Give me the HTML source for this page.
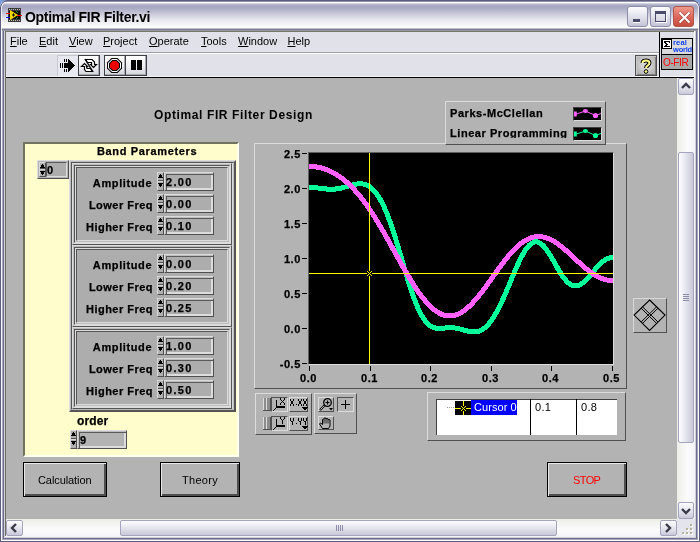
<!DOCTYPE html>
<html><head><meta charset="utf-8"><style>
*{margin:0;padding:0;box-sizing:border-box}
html,body{width:700px;height:542px;overflow:hidden;background:#7b9fdc}
body{will-change:transform;position:relative;font-family:"Liberation Sans",sans-serif;color:#000}
.a{position:absolute}
.t{position:absolute;white-space:nowrap;line-height:13px}
.b11{font-weight:bold;font-size:11px;letter-spacing:0.45px;-webkit-text-stroke:0.25px #000}
.r11{font-size:11px}
.menu span{position:absolute;top:36px;font-size:11px;line-height:11px}
.menu u{text-decoration:underline;text-underline-offset:1px;text-decoration-thickness:1px}
</style></head><body>
<!-- window -->
<div class="a" style="left:0;top:0;width:700px;height:542px;border-radius:8px 8px 0 0;overflow:hidden;background:#e1e1ea">
  <!-- title bar -->
  <div class="a" style="left:0;top:0;width:700px;height:32px;background:linear-gradient(#5c5c80 0 1px,#9090aa 1px 2px,#fff 2px 3px,#d4d4e0 3px 4px,#b8b8cc 4px 5px,#a9a9c3 5px 8px,#e4e4ec 19px,#f6f6f9 25px,#fcfcfd 27px 28px,#c0c0c8 28px 29px,#7c7c98 29px 30px,#9898a4 30px 31px,#787868 31px 32px)"></div>
  <div class="a" style="left:0;top:0;width:700px;height:40px;border-radius:8px 8px 0 0;border:1px solid #5c5c80;border-bottom:none"></div>
  <div class="a" style="left:1px;top:1px;width:698px;height:39px;border-radius:7px 7px 0 0;border:1px solid rgba(255,255,255,0.8);border-top-color:transparent;border-bottom:none"></div>
  <!-- frame rings -->
  <div class="a" style="left:0px;top:31px;width:700px;height:511px;border:1px solid #5c5c7e;border-top:none"></div>
  <div class="a" style="left:1px;top:31px;width:698px;height:510px;border:1px solid #fcfcfe;border-top:none"></div>
  <div class="a" style="left:2px;top:31px;width:696px;height:509px;border:1px solid #a6a6c0;border-top:none"></div>
  <div class="a" style="left:3px;top:31px;width:694px;height:508px;border:1px solid #6e6e8c;border-top:none"></div>
  <div class="a" style="left:4px;top:31px;width:692px;height:507px;border:1px solid #d0d0d8;border-top:none"></div>
  <div class="a" style="left:5px;top:31px;width:1px;height:505px;background:#716f64"></div>
  <div class="a" style="left:694px;top:31px;width:1px;height:506px;background:#fbfbf6"></div>
  <div class="a" style="left:5px;top:536px;width:690px;height:1px;background:#fbfbf0"></div>
  <!-- title icon -->
  <svg class="a" style="left:5px;top:7px" width="18" height="16" viewBox="0 0 18 16">
    <rect x="3" y="1" width="13" height="14" fill="#3a3a3a"/>
    <rect x="4" y="4" width="11" height="8" fill="#0a0a0a"/>
    <g fill="#bbb"><rect x="4" y="2" width="1" height="1"/><rect x="6" y="2" width="1" height="1"/><rect x="8" y="2" width="1" height="1"/><rect x="10" y="2" width="1" height="1"/><rect x="12" y="2" width="1" height="1"/><rect x="14" y="2" width="1" height="1"/>
    <rect x="4" y="13" width="1" height="1"/><rect x="6" y="13" width="1" height="1"/><rect x="8" y="13" width="1" height="1"/><rect x="10" y="13" width="1" height="1"/><rect x="12" y="13" width="1" height="1"/><rect x="14" y="13" width="1" height="1"/></g>
    <rect x="1" y="6" width="4" height="1" fill="#f00"/><rect x="1" y="10" width="4" height="1" fill="#00f"/><rect x="12" y="8" width="5" height="1" fill="#f00"/>
    <path d="M5 3 L13 8 L5 13 Z" fill="#f5d800"/><path d="M7 8h3M8.5 6.5v3" stroke="#000" stroke-width="1"/>
    <path d="M11 4 l2 2 M11 12 l2 -2" stroke="#1a8a1a"/>
  </svg>
  <div class="t" style="left:25px;top:10px;font-size:14px;line-height:14px;font-weight:bold;letter-spacing:-0.3px;color:#000">Optimal FIR Filter.vi</div>
  <!-- title buttons -->
  <div class="a" style="left:627px;top:6px;width:21px;height:21px;border:1px solid #8d8dab;border-radius:3px;background:linear-gradient(#fdfdff,#dcdce8 60%,#c4c4d6)"><div class="a" style="left:5px;top:12px;width:7px;height:3px;background:#4a4a6a;box-shadow:0 1px 0 #fff"></div></div>
  <div class="a" style="left:650px;top:6px;width:21px;height:21px;border:1px solid #8d8dab;border-radius:3px;background:linear-gradient(#fdfdff,#dcdce8 60%,#c4c4d6)"><div class="a" style="left:4px;top:4px;width:11px;height:11px;border:1px solid #4a4a6a;border-top-width:3px;box-shadow:1px 1px 0 #fff"></div></div>
  <div class="a" style="left:673px;top:6px;width:21px;height:21px;border:1px solid #b0584c;border-radius:3px;background:linear-gradient(#ee9a8e,#dc6a5c 50%,#c84c40)"><svg class="a" style="left:2px;top:2px" width="17" height="17"><path d="M3.5 3.5L13.5 13.5M13.5 3.5L3.5 13.5" stroke="#7a2a20" stroke-width="3.2" stroke-opacity="0.5"/><path d="M3.5 3.5L13.5 13.5M13.5 3.5L3.5 13.5" stroke="#fff" stroke-width="2"/></svg></div>
  <!-- menu -->
  <div class="menu">
    <span style="left:10px"><u>F</u>ile</span>
    <span style="left:39px"><u>E</u>dit</span>
    <span style="left:69px"><u>V</u>iew</span>
    <span style="left:103px"><u>P</u>roject</span>
    <span style="left:149px"><u>O</u>perate</span>
    <span style="left:201px"><u>T</u>ools</span>
    <span style="left:238px"><u>W</u>indow</span>
    <span style="left:287.5px"><u>H</u>elp</span>
  </div>
  <div class="a" style="left:6px;top:52px;width:653px;height:1px;background:#a0a0a8"></div>
  <div class="a" style="left:6px;top:53px;width:653px;height:1px;background:#fff"></div>
  <div class="a" style="left:6px;top:76px;width:688px;height:1px;background:#f4f4f8"></div>
  <div class="a" style="left:6px;top:77px;width:688px;height:1px;background:#000"></div>
  <div class="a" style="left:659px;top:32px;width:1px;height:45px;background:#000"></div>
  <!-- toolbar buttons -->
  <div class="a" style="left:57px;top:55px;width:21px;height:21px;background:#e8e8f0;border-left:1px solid #c8c8d0;border-top:1px solid #c8c8d0"></div>
  <svg class="a" style="left:56px;top:54px" width="22" height="22" shape-rendering="crispEdges" fill="#000">
    <polygon points="12,5 19,11.5 12,18"/>
    <rect x="8" y="9" width="4" height="5"/>
    <rect x="8" y="5" width="1" height="3"/><rect x="10" y="5" width="1" height="3"/>
    <rect x="8" y="15" width="1" height="3"/><rect x="10" y="15" width="1" height="3"/>
    <rect x="4" y="9" width="1" height="5"/><rect x="6" y="9" width="1" height="5"/>
  </svg>
  <div class="a" style="left:78px;top:55px;width:22px;height:21px;border:1px solid #404048;background:linear-gradient(#fff,#f0f0f4 50%,#d4d4dc);box-shadow:inset -1px -1px 0 #a8a8b0"></div>
  <svg class="a" style="left:77px;top:54px" width="24" height="23">
    <polygon points="8.5,5.5 15,5.5 17.5,8 17.5,10.5 19.5,10.5 16.5,13.5 13.5,10.5 14.5,10.5 14.5,8.5 10.5,8.5" fill="#fff" stroke="#000" stroke-width="1.2"/>
    <polygon points="15.5,17.5 9,17.5 7.5,15.5 7.5,12.5 4.5,12.5 7.5,9.5 10.5,12.5 9.5,12.5 10,14.5 13.5,14.5" fill="#fff" stroke="#000" stroke-width="1.2"/>
    <path d="M8 5 L16 18" stroke="#000" stroke-width="1.3"/>
  </svg>
  <div class="a" style="left:104px;top:55px;width:22px;height:21px;border:1px solid #404048;background:linear-gradient(#fff,#f0f0f4 50%,#d4d4dc);box-shadow:inset -1px -1px 0 #a8a8b0"></div>
  <svg class="a" style="left:104px;top:55px" width="22" height="21">
    <polygon points="7.5,3 13.5,3 18,7.5 18,13.5 13.5,18 7.5,18 3,13.5 3,7.5" fill="#000"/>
    <polygon points="8,4 13,4 17,8 17,13 13,17 8,17 4,13 4,8" fill="#fff"/>
    <polygon points="8.3,5 12.7,5 16,8.3 16,12.7 12.7,16 8.3,16 5,12.7 5,8.3" fill="#000"/>
    <polygon points="8.7,6 12.3,6 15,8.7 15,12.3 12.3,15 8.7,15 6,12.3 6,8.7" fill="#e00"/>
  </svg>
  <div class="a" style="left:125px;top:55px;width:22px;height:21px;border:1px solid #404048;background:linear-gradient(#fff,#f0f0f4 50%,#d4d4dc);box-shadow:inset -1px -1px 0 #a8a8b0"></div>
  <div class="a" style="left:131px;top:60px;width:5px;height:10px;background:#000"></div>
  <div class="a" style="left:137px;top:60px;width:5px;height:10px;background:#000"></div>
  <!-- help button -->
  <div class="a" style="left:635px;top:55px;width:22px;height:21px;border:1px solid #505050;background:radial-gradient(ellipse at 50% 45%,#d4d4d4 30%,#a4a4a4 100%);box-shadow:inset 1px 1px 0 #c8c8c8,inset -1px -1px 0 #808080"></div>
  <svg class="a" style="left:635px;top:55px" width="22" height="21">
    <path d="M7.5 8 C7.5 4.5 14.5 4.5 14.5 8 C14.5 10.5 11 10.5 11 13" fill="none" stroke="#000" stroke-width="4"/>
    <path d="M7.5 8 C7.5 4.5 14.5 4.5 14.5 8 C14.5 10.5 11 10.5 11 13" fill="none" stroke="#ffff88" stroke-width="2"/>
    <circle cx="11" cy="16.5" r="1.8" fill="#ffff88" stroke="#000"/>
  </svg>
  <!-- connector icon -->
  <div class="a" style="left:661px;top:38px;width:32px;height:32px;background:#000"></div>
  <div class="a" style="left:662px;top:39px;width:30px;height:15px;background:#dadada"></div>
  <div class="a" style="left:662px;top:55px;width:30px;height:14px;background:#a9a9a9"></div>
  <div class="a" style="left:662px;top:39px;width:10px;height:10px;border:1px solid #000;background:#fff"></div>
  <svg class="a" style="left:662px;top:39px" width="10" height="10" shape-rendering="crispEdges" fill="#000"><rect x="2" y="2" width="6" height="1"/><rect x="2" y="3" width="2" height="1"/><rect x="3" y="4" width="2" height="1"/><rect x="4" y="5" width="2" height="1"/><rect x="3" y="6" width="2" height="1"/><rect x="2" y="7" width="6" height="1"/><rect x="7" y="3" width="1" height="1"/></svg>
  <div class="t" style="left:673px;top:39px;font-size:7.5px;line-height:8px;color:#1040f0;font-weight:bold;letter-spacing:0.2px">real</div>
  <div class="t" style="left:673px;top:46px;font-size:7.5px;line-height:8px;color:#1040f0;font-weight:bold;letter-spacing:-0.2px">world</div>
  <div class="t" style="left:663px;top:58px;font-size:10px;line-height:10px;color:#f00;letter-spacing:-0.4px">O-FIR</div>

  <!-- panel -->
  <div class="a" style="left:6px;top:78px;width:671px;height:441px;background:#b3b3b3"></div>

  <!-- vertical scrollbar -->
  <div class="a" style="left:677px;top:78px;width:18px;height:441px;background:linear-gradient(90deg,#eeeee8,#fbfbfd 60%,#f4f4f8)"></div>
  <div class="a" style="left:678px;top:78px;width:16px;height:17px;border:1px solid #a4a4be;border-radius:2px;background:linear-gradient(#fdfdff,#dcdce8 70%,#c8c8d8)"></div>
  <svg class="a" style="left:678px;top:78px" width="16" height="17"><path d="M4 10 L8 6 L12 10" fill="none" stroke="#3a3a48" stroke-width="2.4"/></svg>
  <div class="a" style="left:678px;top:152px;width:16px;height:291px;border:1px solid #a4a4be;border-radius:2px;background:linear-gradient(90deg,#fdfdff,#e4e4ee 50%,#c8c8d8)"></div>
  <div class="a" style="left:683px;top:294px;width:6px;height:7px;background:linear-gradient(#8c8ca8 0 1px,transparent 1px 2px,#8c8ca8 2px 3px,transparent 3px 4px,#8c8ca8 4px 5px,transparent 5px 6px,#8c8ca8 6px 7px)"></div>
  <div class="a" style="left:678px;top:502px;width:16px;height:17px;border:1px solid #a4a4be;border-radius:2px;background:linear-gradient(#fdfdff,#dcdce8 70%,#c8c8d8)"></div>
  <svg class="a" style="left:678px;top:502px" width="16" height="17"><path d="M4 7 L8 11 L12 7" fill="none" stroke="#3a3a48" stroke-width="2.4"/></svg>
  <!-- horizontal scrollbar -->
  <div class="a" style="left:6px;top:519px;width:671px;height:18px;background:linear-gradient(#eeeee8,#fbfbfd 60%,#f4f4f8)"></div>
  <div class="a" style="left:6px;top:520px;width:17px;height:16px;border:1px solid #a4a4be;border-radius:2px;background:linear-gradient(#fdfdff,#dcdce8 70%,#c8c8d8)"></div>
  <svg class="a" style="left:6px;top:520px" width="17" height="16"><path d="M10 4 L6 8 L10 12" fill="none" stroke="#3a3a48" stroke-width="2.4"/></svg>
  <div class="a" style="left:120px;top:520px;width:437px;height:16px;border:1px solid #a4a4be;border-radius:2px;background:linear-gradient(#fdfdff,#e4e4ee 50%,#c8c8d8)"></div>
  <div class="a" style="left:336px;top:525px;width:7px;height:6px;background:linear-gradient(90deg,#8c8ca8 0 1px,transparent 1px 2px,#8c8ca8 2px 3px,transparent 3px 4px,#8c8ca8 4px 5px,transparent 5px 6px,#8c8ca8 6px 7px)"></div>
  <div class="a" style="left:660px;top:520px;width:17px;height:16px;border:1px solid #a4a4be;border-radius:2px;background:linear-gradient(#fdfdff,#dcdce8 70%,#c8c8d8)"></div>
  <svg class="a" style="left:660px;top:520px" width="17" height="16"><path d="M6 4 L10 8 L6 12" fill="none" stroke="#3a3a48" stroke-width="2.4"/></svg>
  <!-- size grip -->
  <div class="a" style="left:677px;top:519px;width:18px;height:18px;background:#e4e4ec"></div>
  <svg class="a" style="left:677px;top:519px" width="18" height="18" shape-rendering="crispEdges"><rect x="14" y="6" width="2" height="2" fill="#fff"/><rect x="10" y="10" width="2" height="2" fill="#fff"/><rect x="14" y="10" width="2" height="2" fill="#fff"/><rect x="6" y="14" width="2" height="2" fill="#fff"/><rect x="10" y="14" width="2" height="2" fill="#fff"/><rect x="14" y="14" width="2" height="2" fill="#fff"/><rect x="13" y="5" width="2" height="2" fill="#b8b49c"/><rect x="9" y="9" width="2" height="2" fill="#b8b49c"/><rect x="13" y="9" width="2" height="2" fill="#b8b49c"/><rect x="5" y="13" width="2" height="2" fill="#b8b49c"/><rect x="9" y="13" width="2" height="2" fill="#b8b49c"/><rect x="13" y="13" width="2" height="2" fill="#b8b49c"/></svg>

  <!-- PANEL CONTENT -->
  <div class="t b11" style="left:154px;top:109px;font-size:12px;letter-spacing:0.62px;-webkit-text-stroke:0">Optimal FIR Filter Design</div>
  <div class="a" style="left:23px;top:142px;width:216px;height:315px;border-style:solid;border-width:2px;border-color:#717360 #fffff0 #fffff0 #717360;background:#fffdcc"></div><div class="t b11" style="left:97px;top:145px;letter-spacing:0.65px">Band Parameters</div><div class="a" style="left:37px;top:160px;width:32px;height:19px;border-style:solid;border-width:1px;border-color:#dcdcdc #505050 #505050 #dcdcdc;background:#b3b3b3"></div><div class="a" style="left:46px;top:162px;width:21px;height:15px;border-style:solid;border-width:1px;border-color:#5a5a5a #dcdcdc #dcdcdc #5a5a5a;background:#adadad"></div><div class="a" style="left:39px;top:162px;width:7px;height:15px;border-style:solid;border-width:1px;border-color:#d8d8d8 #505050 #505050 #d8d8d8;background:#b0b0b0"></div><div class="a" style="left:40px;top:168px;width:5px;height:1px;background:#505050"></div><div class="a" style="left:40px;top:169px;width:5px;height:1px;background:#d8d8d8"></div><svg class="a" style="left:39px;top:162px" width="7" height="15" shape-rendering="crispEdges"><path d="M3 2h1v1h-1zM2 3h3v1h-3zM1 5h5v1h-5zM2 4h3v1h-3z" fill="#000"/><path d="M1 9h5v1h-5zM2 10h3v1h-3zM2 11h3v1h-3zM3 12h1v1h-1z" fill="#000"/></svg><div class="t b11" style="left:47px;top:164px;letter-spacing:1.3px">0</div><div class="a" style="left:69px;top:160px;width:167px;height:252px;border-style:solid;border-width:1px;border-color:#dcdcdc #555555 #555555 #dcdcdc"></div><div class="a" style="left:70px;top:161px;width:165px;height:250px;border-style:solid;border-width:1px;border-color:#bcbcbc #555555 #555555 #bcbcbc"></div><div class="a" style="left:71px;top:162px;width:163px;height:248px;border-style:solid;border-width:1px;border-color:#555555 #bcbcbc #bcbcbc #555555"></div><div class="a" style="left:72px;top:163px;width:161px;height:246px;border-style:solid;border-width:1px;border-color:#dcdcdc #dcdcdc #dcdcdc #dcdcdc"></div><div class="a" style="left:73px;top:164px;width:159px;height:244px;background:#b3b3b3"></div><div class="a" style="left:72px;top:163px;width:160px;height:82px;border-style:solid;border-width:1px;border-color:#dcdcdc #555555 #555555 #dcdcdc"></div><div class="a" style="left:73px;top:164px;width:158px;height:80px;border-style:solid;border-width:1px;border-color:#bcbcbc #dcdcdc #dcdcdc #bcbcbc"></div><div class="a" style="left:74px;top:165px;width:156px;height:78px;border-style:solid;border-width:1px;border-color:#555555 #dcdcdc #dcdcdc #555555"></div><div class="a" style="left:75px;top:166px;width:154px;height:76px;border-style:solid;border-width:1px;border-color:#dcdcdc #bcbcbc #bcbcbc #dcdcdc"></div><div class="a" style="left:76px;top:167px;width:152px;height:74px;border-style:solid;border-width:1px;border-color:#555555 #dcdcdc #dcdcdc #555555"></div><div class="a" style="left:77px;top:168px;width:150px;height:72px;background:#adadad"></div><div class="t b11" style="left:2.1999999999999886px;width:150px;text-align:right;top:177px;letter-spacing:0.62px">Amplitude</div><div class="a" style="left:157px;top:172px;width:7px;height:19px;border-style:solid;border-width:1px;border-color:#d8d8d8 #505050 #505050 #d8d8d8;background:#b0b0b0"></div><div class="a" style="left:158px;top:180px;width:5px;height:1px;background:#505050"></div><div class="a" style="left:158px;top:181px;width:5px;height:1px;background:#d8d8d8"></div><svg class="a" style="left:157px;top:172px" width="7" height="19" shape-rendering="crispEdges"><path d="M3 2h1v1h-1zM2 3h3v1h-3zM1 5h5v1h-5zM2 4h3v1h-3z" fill="#000"/><path d="M1 11h5v1h-5zM2 12h3v1h-3zM2 13h3v1h-3zM3 14h1v1h-1z" fill="#000"/></svg><div class="t b11" style="left:3.0px;width:150px;text-align:right;top:199px;letter-spacing:0.48px">Lower Freq</div><div class="a" style="left:157px;top:194px;width:7px;height:19px;border-style:solid;border-width:1px;border-color:#d8d8d8 #505050 #505050 #d8d8d8;background:#b0b0b0"></div><div class="a" style="left:158px;top:202px;width:5px;height:1px;background:#505050"></div><div class="a" style="left:158px;top:203px;width:5px;height:1px;background:#d8d8d8"></div><svg class="a" style="left:157px;top:194px" width="7" height="19" shape-rendering="crispEdges"><path d="M3 2h1v1h-1zM2 3h3v1h-3zM1 5h5v1h-5zM2 4h3v1h-3z" fill="#000"/><path d="M1 11h5v1h-5zM2 12h3v1h-3zM2 13h3v1h-3zM3 14h1v1h-1z" fill="#000"/></svg><div class="t b11" style="left:3.0px;width:150px;text-align:right;top:221px;letter-spacing:0.48px">Higher Freq</div><div class="a" style="left:157px;top:216px;width:7px;height:19px;border-style:solid;border-width:1px;border-color:#d8d8d8 #505050 #505050 #d8d8d8;background:#b0b0b0"></div><div class="a" style="left:158px;top:224px;width:5px;height:1px;background:#505050"></div><div class="a" style="left:158px;top:225px;width:5px;height:1px;background:#d8d8d8"></div><svg class="a" style="left:157px;top:216px" width="7" height="19" shape-rendering="crispEdges"><path d="M3 2h1v1h-1zM2 3h3v1h-3zM1 5h5v1h-5zM2 4h3v1h-3z" fill="#000"/><path d="M1 11h5v1h-5zM2 12h3v1h-3zM2 13h3v1h-3zM3 14h1v1h-1z" fill="#000"/></svg><div class="a" style="left:72px;top:245px;width:160px;height:82px;border-style:solid;border-width:1px;border-color:#dcdcdc #555555 #555555 #dcdcdc"></div><div class="a" style="left:73px;top:246px;width:158px;height:80px;border-style:solid;border-width:1px;border-color:#bcbcbc #dcdcdc #dcdcdc #bcbcbc"></div><div class="a" style="left:74px;top:247px;width:156px;height:78px;border-style:solid;border-width:1px;border-color:#555555 #dcdcdc #dcdcdc #555555"></div><div class="a" style="left:75px;top:248px;width:154px;height:76px;border-style:solid;border-width:1px;border-color:#dcdcdc #bcbcbc #bcbcbc #dcdcdc"></div><div class="a" style="left:76px;top:249px;width:152px;height:74px;border-style:solid;border-width:1px;border-color:#555555 #dcdcdc #dcdcdc #555555"></div><div class="a" style="left:77px;top:250px;width:150px;height:72px;background:#adadad"></div><div class="t b11" style="left:2.1999999999999886px;width:150px;text-align:right;top:259px;letter-spacing:0.62px">Amplitude</div><div class="a" style="left:157px;top:254px;width:7px;height:19px;border-style:solid;border-width:1px;border-color:#d8d8d8 #505050 #505050 #d8d8d8;background:#b0b0b0"></div><div class="a" style="left:158px;top:262px;width:5px;height:1px;background:#505050"></div><div class="a" style="left:158px;top:263px;width:5px;height:1px;background:#d8d8d8"></div><svg class="a" style="left:157px;top:254px" width="7" height="19" shape-rendering="crispEdges"><path d="M3 2h1v1h-1zM2 3h3v1h-3zM1 5h5v1h-5zM2 4h3v1h-3z" fill="#000"/><path d="M1 11h5v1h-5zM2 12h3v1h-3zM2 13h3v1h-3zM3 14h1v1h-1z" fill="#000"/></svg><div class="t b11" style="left:3.0px;width:150px;text-align:right;top:281px;letter-spacing:0.48px">Lower Freq</div><div class="a" style="left:157px;top:276px;width:7px;height:19px;border-style:solid;border-width:1px;border-color:#d8d8d8 #505050 #505050 #d8d8d8;background:#b0b0b0"></div><div class="a" style="left:158px;top:284px;width:5px;height:1px;background:#505050"></div><div class="a" style="left:158px;top:285px;width:5px;height:1px;background:#d8d8d8"></div><svg class="a" style="left:157px;top:276px" width="7" height="19" shape-rendering="crispEdges"><path d="M3 2h1v1h-1zM2 3h3v1h-3zM1 5h5v1h-5zM2 4h3v1h-3z" fill="#000"/><path d="M1 11h5v1h-5zM2 12h3v1h-3zM2 13h3v1h-3zM3 14h1v1h-1z" fill="#000"/></svg><div class="t b11" style="left:3.0px;width:150px;text-align:right;top:303px;letter-spacing:0.48px">Higher Freq</div><div class="a" style="left:157px;top:298px;width:7px;height:19px;border-style:solid;border-width:1px;border-color:#d8d8d8 #505050 #505050 #d8d8d8;background:#b0b0b0"></div><div class="a" style="left:158px;top:306px;width:5px;height:1px;background:#505050"></div><div class="a" style="left:158px;top:307px;width:5px;height:1px;background:#d8d8d8"></div><svg class="a" style="left:157px;top:298px" width="7" height="19" shape-rendering="crispEdges"><path d="M3 2h1v1h-1zM2 3h3v1h-3zM1 5h5v1h-5zM2 4h3v1h-3z" fill="#000"/><path d="M1 11h5v1h-5zM2 12h3v1h-3zM2 13h3v1h-3zM3 14h1v1h-1z" fill="#000"/></svg><div class="a" style="left:72px;top:327px;width:160px;height:82px;border-style:solid;border-width:1px;border-color:#dcdcdc #555555 #555555 #dcdcdc"></div><div class="a" style="left:73px;top:328px;width:158px;height:80px;border-style:solid;border-width:1px;border-color:#bcbcbc #dcdcdc #dcdcdc #bcbcbc"></div><div class="a" style="left:74px;top:329px;width:156px;height:78px;border-style:solid;border-width:1px;border-color:#555555 #dcdcdc #dcdcdc #555555"></div><div class="a" style="left:75px;top:330px;width:154px;height:76px;border-style:solid;border-width:1px;border-color:#dcdcdc #bcbcbc #bcbcbc #dcdcdc"></div><div class="a" style="left:76px;top:331px;width:152px;height:74px;border-style:solid;border-width:1px;border-color:#555555 #dcdcdc #dcdcdc #555555"></div><div class="a" style="left:77px;top:332px;width:150px;height:72px;background:#adadad"></div><div class="t b11" style="left:2.1999999999999886px;width:150px;text-align:right;top:341px;letter-spacing:0.62px">Amplitude</div><div class="a" style="left:157px;top:336px;width:7px;height:19px;border-style:solid;border-width:1px;border-color:#d8d8d8 #505050 #505050 #d8d8d8;background:#b0b0b0"></div><div class="a" style="left:158px;top:344px;width:5px;height:1px;background:#505050"></div><div class="a" style="left:158px;top:345px;width:5px;height:1px;background:#d8d8d8"></div><svg class="a" style="left:157px;top:336px" width="7" height="19" shape-rendering="crispEdges"><path d="M3 2h1v1h-1zM2 3h3v1h-3zM1 5h5v1h-5zM2 4h3v1h-3z" fill="#000"/><path d="M1 11h5v1h-5zM2 12h3v1h-3zM2 13h3v1h-3zM3 14h1v1h-1z" fill="#000"/></svg><div class="t b11" style="left:3.0px;width:150px;text-align:right;top:363px;letter-spacing:0.48px">Lower Freq</div><div class="a" style="left:157px;top:358px;width:7px;height:19px;border-style:solid;border-width:1px;border-color:#d8d8d8 #505050 #505050 #d8d8d8;background:#b0b0b0"></div><div class="a" style="left:158px;top:366px;width:5px;height:1px;background:#505050"></div><div class="a" style="left:158px;top:367px;width:5px;height:1px;background:#d8d8d8"></div><svg class="a" style="left:157px;top:358px" width="7" height="19" shape-rendering="crispEdges"><path d="M3 2h1v1h-1zM2 3h3v1h-3zM1 5h5v1h-5zM2 4h3v1h-3z" fill="#000"/><path d="M1 11h5v1h-5zM2 12h3v1h-3zM2 13h3v1h-3zM3 14h1v1h-1z" fill="#000"/></svg><div class="t b11" style="left:3.0px;width:150px;text-align:right;top:385px;letter-spacing:0.48px">Higher Freq</div><div class="a" style="left:157px;top:380px;width:7px;height:19px;border-style:solid;border-width:1px;border-color:#d8d8d8 #505050 #505050 #d8d8d8;background:#b0b0b0"></div><div class="a" style="left:158px;top:388px;width:5px;height:1px;background:#505050"></div><div class="a" style="left:158px;top:389px;width:5px;height:1px;background:#d8d8d8"></div><svg class="a" style="left:157px;top:380px" width="7" height="19" shape-rendering="crispEdges"><path d="M3 2h1v1h-1zM2 3h3v1h-3zM1 5h5v1h-5zM2 4h3v1h-3z" fill="#000"/><path d="M1 11h5v1h-5zM2 12h3v1h-3zM2 13h3v1h-3zM3 14h1v1h-1z" fill="#000"/></svg><div class="a" style="left:164px;top:172px;width:50px;height:19px;border-style:solid;border-width:1px;border-color:#dcdcdc #505050 #505050 #dcdcdc;background:#adadad;box-shadow:inset 1px 1px 0 #bcbcbc,inset 2px 2px 0 #5a5a5a,inset -2px -2px 0 #dcdcdc"></div><div class="t b11" style="left:166px;top:176px;letter-spacing:1.3px">2.00</div><div class="a" style="left:164px;top:194px;width:50px;height:19px;border-style:solid;border-width:1px;border-color:#dcdcdc #505050 #505050 #dcdcdc;background:#adadad;box-shadow:inset 1px 1px 0 #bcbcbc,inset 2px 2px 0 #5a5a5a,inset -2px -2px 0 #dcdcdc"></div><div class="t b11" style="left:166px;top:198px;letter-spacing:1.3px">0.00</div><div class="a" style="left:164px;top:216px;width:50px;height:19px;border-style:solid;border-width:1px;border-color:#dcdcdc #505050 #505050 #dcdcdc;background:#adadad;box-shadow:inset 1px 1px 0 #bcbcbc,inset 2px 2px 0 #5a5a5a,inset -2px -2px 0 #dcdcdc"></div><div class="t b11" style="left:166px;top:220px;letter-spacing:1.3px">0.10</div><div class="a" style="left:164px;top:254px;width:50px;height:19px;border-style:solid;border-width:1px;border-color:#dcdcdc #505050 #505050 #dcdcdc;background:#adadad;box-shadow:inset 1px 1px 0 #bcbcbc,inset 2px 2px 0 #5a5a5a,inset -2px -2px 0 #dcdcdc"></div><div class="t b11" style="left:166px;top:258px;letter-spacing:1.3px">0.00</div><div class="a" style="left:164px;top:276px;width:50px;height:19px;border-style:solid;border-width:1px;border-color:#dcdcdc #505050 #505050 #dcdcdc;background:#adadad;box-shadow:inset 1px 1px 0 #bcbcbc,inset 2px 2px 0 #5a5a5a,inset -2px -2px 0 #dcdcdc"></div><div class="t b11" style="left:166px;top:280px;letter-spacing:1.3px">0.20</div><div class="a" style="left:164px;top:298px;width:50px;height:19px;border-style:solid;border-width:1px;border-color:#dcdcdc #505050 #505050 #dcdcdc;background:#adadad;box-shadow:inset 1px 1px 0 #bcbcbc,inset 2px 2px 0 #5a5a5a,inset -2px -2px 0 #dcdcdc"></div><div class="t b11" style="left:166px;top:302px;letter-spacing:1.3px">0.25</div><div class="a" style="left:164px;top:336px;width:50px;height:19px;border-style:solid;border-width:1px;border-color:#dcdcdc #505050 #505050 #dcdcdc;background:#adadad;box-shadow:inset 1px 1px 0 #bcbcbc,inset 2px 2px 0 #5a5a5a,inset -2px -2px 0 #dcdcdc"></div><div class="t b11" style="left:166px;top:340px;letter-spacing:1.3px">1.00</div><div class="a" style="left:164px;top:358px;width:50px;height:19px;border-style:solid;border-width:1px;border-color:#dcdcdc #505050 #505050 #dcdcdc;background:#adadad;box-shadow:inset 1px 1px 0 #bcbcbc,inset 2px 2px 0 #5a5a5a,inset -2px -2px 0 #dcdcdc"></div><div class="t b11" style="left:166px;top:362px;letter-spacing:1.3px">0.30</div><div class="a" style="left:164px;top:380px;width:50px;height:19px;border-style:solid;border-width:1px;border-color:#dcdcdc #505050 #505050 #dcdcdc;background:#adadad;box-shadow:inset 1px 1px 0 #bcbcbc,inset 2px 2px 0 #5a5a5a,inset -2px -2px 0 #dcdcdc"></div><div class="t b11" style="left:166px;top:384px;letter-spacing:1.3px">0.50</div><div class="t b11" style="left:77px;top:415px;font-size:12px;letter-spacing:0.15px">order</div><div class="a" style="left:70px;top:430px;width:7px;height:19px;border-style:solid;border-width:1px;border-color:#d8d8d8 #505050 #505050 #d8d8d8;background:#b0b0b0"></div><div class="a" style="left:71px;top:438px;width:5px;height:1px;background:#505050"></div><div class="a" style="left:71px;top:439px;width:5px;height:1px;background:#d8d8d8"></div><svg class="a" style="left:70px;top:430px" width="7" height="19" shape-rendering="crispEdges"><path d="M3 2h1v1h-1zM2 3h3v1h-3zM1 5h5v1h-5zM2 4h3v1h-3z" fill="#000"/><path d="M1 11h5v1h-5zM2 12h3v1h-3zM2 13h3v1h-3zM3 14h1v1h-1z" fill="#000"/></svg><div class="a" style="left:77px;top:430px;width:50px;height:19px;border-style:solid;border-width:1px;border-color:#dcdcdc #505050 #505050 #dcdcdc;background:#b3b3b3;box-shadow:inset 1px 1px 0 #bcbcbc,inset 2px 2px 0 #5a5a5a,inset -2px -2px 0 #dcdcdc"></div><div class="t b11" style="left:80px;top:434px;letter-spacing:1.3px">9</div>
  <div class="a" style="left:254px;top:143px;width:373px;height:246px;border-style:solid;border-width:1px;border-color:#dcdcdc #505050 #505050 #dcdcdc"></div><div class="a" style="left:308px;top:152px;width:306px;height:213px;border-style:solid;border-width:1px;border-color:#606060 #dcdcdc #dcdcdc #606060;background:#000"></div><svg class="a" style="left:0;top:0" width="700" height="542">
<defs><clipPath id="pc"><rect x="309" y="153" width="304" height="211"/></clipPath></defs>
<g clip-path="url(#pc)">
<path d="M309 187.33 L310 187.34 L311 187.37 L312 187.41 L313 187.47 L314 187.55 L315 187.64 L316 187.74 L317 187.85 L318 187.97 L319 188.10 L320 188.23 L321 188.36 L322 188.49 L323 188.62 L324 188.75 L325 188.86 L326 188.96 L327 189.05 L328 189.12 L329 189.18 L330 189.21 L331 189.23 L332 189.22 L333 189.19 L334 189.13 L335 189.05 L336 188.94 L337 188.81 L338 188.66 L339 188.48 L340 188.28 L341 188.06 L342 187.82 L343 187.56 L344 187.29 L345 187.01 L346 186.72 L347 186.42 L348 186.12 L349 185.83 L350 185.54 L351 185.25 L352 184.98 L353 184.73 L354 184.50 L355 184.29 L356 184.11 L357 183.97 L358 183.86 L359 183.80 L360 183.78 L361 183.82 L362 183.90 L363 184.05 L364 184.26 L365 184.54 L366 184.89 L367 185.31 L368 185.81 L369 186.40 L370 187.07 L371 187.82 L372 188.67 L373 189.62 L374 190.66 L375 191.80 L376 193.05 L377 194.40 L378 195.86 L379 197.42 L380 199.10 L381 200.88 L382 202.78 L383 204.78 L384 206.90 L385 209.12 L386 211.45 L387 213.89 L388 216.43 L389 219.07 L390 221.80 L391 224.63 L392 227.54 L393 230.54 L394 233.61 L395 236.76 L396 239.96 L397 243.22 L398 246.53 L399 249.87 L400 253.25 L401 256.64 L402 260.05 L403 263.46 L404 266.86 L405 270.24 L406 273.59 L407 276.91 L408 280.17 L409 283.38 L410 286.52 L411 289.58 L412 292.56 L413 295.44 L414 298.22 L415 300.90 L416 303.45 L417 305.89 L418 308.21 L419 310.39 L420 312.44 L421 314.36 L422 316.14 L423 317.79 L424 319.30 L425 320.67 L426 321.91 L427 323.03 L428 324.02 L429 324.89 L430 325.64 L431 326.28 L432 326.82 L433 327.27 L434 327.62 L435 327.90 L436 328.10 L437 328.24 L438 328.33 L439 328.36 L440 328.36 L441 328.32 L442 328.26 L443 328.19 L444 328.10 L445 328.02 L446 327.93 L447 327.86 L448 327.80 L449 327.76 L450 327.74 L451 327.74 L452 327.77 L453 327.83 L454 327.92 L455 328.04 L456 328.18 L457 328.35 L458 328.55 L459 328.77 L460 329.01 L461 329.27 L462 329.54 L463 329.81 L464 330.09 L465 330.37 L466 330.64 L467 330.90 L468 331.14 L469 331.35 L470 331.54 L471 331.69 L472 331.80 L473 331.87 L474 331.89 L475 331.85 L476 331.75 L477 331.59 L478 331.36 L479 331.05 L480 330.68 L481 330.22 L482 329.69 L483 329.07 L484 328.36 L485 327.57 L486 326.70 L487 325.73 L488 324.68 L489 323.53 L490 322.30 L491 320.98 L492 319.58 L493 318.09 L494 316.51 L495 314.86 L496 313.12 L497 311.31 L498 309.43 L499 307.47 L500 305.46 L501 303.37 L502 301.24 L503 299.04 L504 296.81 L505 294.52 L506 292.21 L507 289.86 L508 287.49 L509 285.10 L510 282.70 L511 280.29 L512 277.90 L513 275.51 L514 273.14 L515 270.80 L516 268.50 L517 266.24 L518 264.03 L519 261.88 L520 259.81 L521 257.81 L522 255.90 L523 254.08 L524 252.36 L525 250.75 L526 249.26 L527 247.89 L528 246.65 L529 245.54 L530 244.57 L531 243.75 L532 243.07 L533 242.54 L534 242.16 L535 241.93 L536 241.86 L537 241.94 L538 242.17 L539 242.55 L540 243.07 L541 243.74 L542 244.54 L543 245.47 L544 246.52 L545 247.69 L546 248.96 L547 250.34 L548 251.80 L549 253.34 L550 254.94 L551 256.61 L552 258.31 L553 260.06 L554 261.82 L555 263.59 L556 265.36 L557 267.12 L558 268.85 L559 270.55 L560 272.20 L561 273.79 L562 275.31 L563 276.76 L564 278.13 L565 279.40 L566 280.57 L567 281.63 L568 282.59 L569 283.42 L570 284.14 L571 284.74 L572 285.21 L573 285.56 L574 285.78 L575 285.89 L576 285.86 L577 285.72 L578 285.47 L579 285.10 L580 284.63 L581 284.05 L582 283.39 L583 282.63 L584 281.79 L585 280.88 L586 279.90 L587 278.87 L588 277.79 L589 276.66 L590 275.51 L591 274.33 L592 273.14 L593 271.95 L594 270.75 L595 269.57 L596 268.41 L597 267.28 L598 266.18 L599 265.12 L600 264.12 L601 263.16 L602 262.27 L603 261.45 L604 260.70 L605 260.03 L606 259.44 L607 258.93 L608 258.51 L609 258.19 L610 257.95 L611 257.81 L612 257.76 L613 257.81" fill="none" stroke="#00ff99" stroke-width="5" stroke-linejoin="round" stroke-linecap="round" shape-rendering="crispEdges"/>
<path d="M309 166.38 L310 166.39 L311 166.42 L312 166.47 L313 166.54 L314 166.64 L315 166.75 L316 166.89 L317 167.05 L318 167.23 L319 167.43 L320 167.65 L321 167.90 L322 168.16 L323 168.45 L324 168.76 L325 169.10 L326 169.45 L327 169.83 L328 170.23 L329 170.66 L330 171.10 L331 171.58 L332 172.07 L333 172.59 L334 173.13 L335 173.70 L336 174.30 L337 174.91 L338 175.56 L339 176.22 L340 176.92 L341 177.64 L342 178.38 L343 179.16 L344 179.95 L345 180.78 L346 181.63 L347 182.50 L348 183.41 L349 184.34 L350 185.30 L351 186.28 L352 187.29 L353 188.33 L354 189.40 L355 190.49 L356 191.61 L357 192.76 L358 193.93 L359 195.13 L360 196.36 L361 197.61 L362 198.89 L363 200.20 L364 201.53 L365 202.88 L366 204.26 L367 205.67 L368 207.10 L369 208.55 L370 210.03 L371 211.53 L372 213.05 L373 214.59 L374 216.16 L375 217.74 L376 219.35 L377 220.97 L378 222.62 L379 224.28 L380 225.95 L381 227.65 L382 229.35 L383 231.08 L384 232.81 L385 234.56 L386 236.32 L387 238.09 L388 239.87 L389 241.65 L390 243.44 L391 245.24 L392 247.05 L393 248.85 L394 250.66 L395 252.47 L396 254.28 L397 256.09 L398 257.90 L399 259.70 L400 261.49 L401 263.28 L402 265.06 L403 266.83 L404 268.59 L405 270.34 L406 272.08 L407 273.80 L408 275.50 L409 277.18 L410 278.85 L411 280.49 L412 282.12 L413 283.71 L414 285.29 L415 286.84 L416 288.36 L417 289.85 L418 291.31 L419 292.74 L420 294.14 L421 295.50 L422 296.83 L423 298.12 L424 299.38 L425 300.59 L426 301.77 L427 302.91 L428 304.00 L429 305.05 L430 306.06 L431 307.02 L432 307.94 L433 308.81 L434 309.63 L435 310.40 L436 311.13 L437 311.81 L438 312.44 L439 313.01 L440 313.54 L441 314.01 L442 314.44 L443 314.81 L444 315.13 L445 315.39 L446 315.61 L447 315.77 L448 315.87 L449 315.93 L450 315.93 L451 315.88 L452 315.78 L453 315.62 L454 315.42 L455 315.16 L456 314.85 L457 314.49 L458 314.09 L459 313.63 L460 313.12 L461 312.57 L462 311.97 L463 311.32 L464 310.63 L465 309.89 L466 309.11 L467 308.29 L468 307.42 L469 306.52 L470 305.58 L471 304.60 L472 303.59 L473 302.54 L474 301.45 L475 300.34 L476 299.19 L477 298.02 L478 296.82 L479 295.59 L480 294.34 L481 293.07 L482 291.77 L483 290.46 L484 289.13 L485 287.78 L486 286.42 L487 285.04 L488 283.66 L489 282.27 L490 280.87 L491 279.46 L492 278.06 L493 276.65 L494 275.24 L495 273.83 L496 272.43 L497 271.03 L498 269.65 L499 268.27 L500 266.90 L501 265.54 L502 264.20 L503 262.87 L504 261.56 L505 260.28 L506 259.01 L507 257.76 L508 256.54 L509 255.34 L510 254.17 L511 253.03 L512 251.92 L513 250.84 L514 249.79 L515 248.78 L516 247.80 L517 246.85 L518 245.94 L519 245.07 L520 244.24 L521 243.45 L522 242.70 L523 241.99 L524 241.32 L525 240.69 L526 240.11 L527 239.57 L528 239.07 L529 238.62 L530 238.21 L531 237.85 L532 237.53 L533 237.26 L534 237.03 L535 236.85 L536 236.71 L537 236.62 L538 236.57 L539 236.57 L540 236.61 L541 236.70 L542 236.82 L543 236.99 L544 237.20 L545 237.46 L546 237.75 L547 238.08 L548 238.46 L549 238.87 L550 239.31 L551 239.80 L552 240.31 L553 240.86 L554 241.45 L555 242.06 L556 242.71 L557 243.38 L558 244.08 L559 244.81 L560 245.56 L561 246.34 L562 247.14 L563 247.95 L564 248.79 L565 249.64 L566 250.51 L567 251.39 L568 252.29 L569 253.19 L570 254.11 L571 255.03 L572 255.96 L573 256.89 L574 257.82 L575 258.76 L576 259.69 L577 260.62 L578 261.55 L579 262.47 L580 263.38 L581 264.28 L582 265.18 L583 266.06 L584 266.92 L585 267.78 L586 268.61 L587 269.43 L588 270.22 L589 271.00 L590 271.75 L591 272.48 L592 273.18 L593 273.86 L594 274.51 L595 275.13 L596 275.72 L597 276.29 L598 276.82 L599 277.31 L600 277.78 L601 278.21 L602 278.60 L603 278.96 L604 279.28 L605 279.57 L606 279.82 L607 280.03 L608 280.21 L609 280.34 L610 280.44 L611 280.50 L612 280.52 L613 280.50" fill="none" stroke="#ff60ff" stroke-width="5" stroke-linejoin="round" stroke-linecap="round" shape-rendering="crispEdges"/>
</g><g shape-rendering="crispEdges" fill="#ffff00"><rect x="369" y="153" width="1" height="118"/><rect x="369" y="276" width="1" height="88"/><rect x="309" y="273" width="58" height="1"/><rect x="372" y="273" width="241" height="1"/><rect x="367" y="271" width="1" height="1"/><rect x="368" y="272" width="1" height="1"/><rect x="369" y="273" width="1" height="1"/><rect x="370" y="274" width="1" height="1"/><rect x="371" y="275" width="1" height="1"/><rect x="371" y="271" width="1" height="1"/><rect x="370" y="272" width="1" height="1"/><rect x="368" y="274" width="1" height="1"/><rect x="367" y="275" width="1" height="1"/>
</g></svg><div class="a" style="left:302px;top:153px;width:5px;height:1px;background:#000"></div><div class="t b11" style="left:201px;width:100px;text-align:right;top:148px;letter-spacing:0.6px">2.5</div><div class="a" style="left:302px;top:188px;width:5px;height:1px;background:#000"></div><div class="t b11" style="left:201px;width:100px;text-align:right;top:183px;letter-spacing:0.6px">2.0</div><div class="a" style="left:302px;top:223px;width:5px;height:1px;background:#000"></div><div class="t b11" style="left:201px;width:100px;text-align:right;top:218px;letter-spacing:0.6px">1.5</div><div class="a" style="left:302px;top:258px;width:5px;height:1px;background:#000"></div><div class="t b11" style="left:201px;width:100px;text-align:right;top:253px;letter-spacing:0.6px">1.0</div><div class="a" style="left:302px;top:293px;width:5px;height:1px;background:#000"></div><div class="t b11" style="left:201px;width:100px;text-align:right;top:288px;letter-spacing:0.6px">0.5</div><div class="a" style="left:302px;top:328px;width:5px;height:1px;background:#000"></div><div class="t b11" style="left:201px;width:100px;text-align:right;top:323px;letter-spacing:0.6px">0.0</div><div class="a" style="left:302px;top:363px;width:5px;height:1px;background:#000"></div><div class="t b11" style="left:201px;width:100px;text-align:right;top:358px;letter-spacing:0.6px">-0.5</div><div class="a" style="left:309px;top:366px;width:1px;height:5px;background:#000"></div><div class="t b11" style="left:278px;width:61px;text-align:center;top:372px;letter-spacing:0.6px">0.0</div><div class="a" style="left:370px;top:366px;width:1px;height:5px;background:#000"></div><div class="t b11" style="left:339px;width:61px;text-align:center;top:372px;letter-spacing:0.6px">0.1</div><div class="a" style="left:430px;top:366px;width:1px;height:5px;background:#000"></div><div class="t b11" style="left:399px;width:61px;text-align:center;top:372px;letter-spacing:0.6px">0.2</div><div class="a" style="left:491px;top:366px;width:1px;height:5px;background:#000"></div><div class="t b11" style="left:460px;width:61px;text-align:center;top:372px;letter-spacing:0.6px">0.3</div><div class="a" style="left:551px;top:366px;width:1px;height:5px;background:#000"></div><div class="t b11" style="left:520px;width:61px;text-align:center;top:372px;letter-spacing:0.6px">0.4</div><div class="a" style="left:612px;top:366px;width:1px;height:5px;background:#000"></div><div class="t b11" style="left:581px;width:61px;text-align:center;top:372px;letter-spacing:0.6px">0.5</div><div class="a" style="left:445px;top:101px;width:161px;height:44px;border-style:solid;border-width:1px;border-color:#dcdcdc #505050 #505050 #dcdcdc;background:#b3b3b3;overflow:hidden"><div class="t b11" style="left:4px;top:5px;letter-spacing:0.55px">Parks-McClellan</div><div class="a" style="left:4px;top:25px;width:140px;height:11px;overflow:hidden"><div class="t b11" style="left:0;top:0;letter-spacing:0.55px">Linear Programming</div></div></div><div class="a" style="left:573px;top:107px;width:29px;height:14px;border-style:solid;border-width:1px;border-color:#404040 #dcdcdc #dcdcdc #404040;background:#000"></div><svg class="a" style="left:573px;top:107px" width="29" height="14"><path d="M2 7.5 L12.4 4 L22.5 8.5 L28 6.5" fill="none" stroke="#ff60ff" stroke-width="1"/><rect x="1" y="4.5" width="2.8" height="5" fill="#ff60ff"/><ellipse cx="12.4" cy="4" rx="2.5" ry="2" fill="#ff60ff"/><circle cx="22.5" cy="8.5" r="2.6" fill="#ff60ff"/></svg><div class="a" style="left:573px;top:127px;width:29px;height:14px;border-style:solid;border-width:1px;border-color:#404040 #dcdcdc #dcdcdc #404040;background:#000"></div><svg class="a" style="left:573px;top:127px" width="29" height="14"><path d="M2 7.5 L12.4 4 L22.5 8.5 L28 6.5" fill="none" stroke="#00ff99" stroke-width="1"/><rect x="1" y="4.5" width="2.8" height="5" fill="#00ff99"/><ellipse cx="12.4" cy="4" rx="2.5" ry="2" fill="#00ff99"/><circle cx="22.5" cy="8.5" r="2.6" fill="#00ff99"/></svg><div class="a" style="left:255px;top:393px;width:57px;height:42px;border-style:solid;border-width:1px;border-color:#dcdcdc #505050 #505050 #dcdcdc"></div><div class="a" style="left:256px;top:394px;width:55px;height:40px;background:#b3b3b3"></div><div class="a" style="left:314px;top:393px;width:43px;height:41px;border-style:solid;border-width:1px;border-color:#dcdcdc #505050 #505050 #dcdcdc"></div><div class="a" style="left:315px;top:394px;width:41px;height:39px;background:#b3b3b3"></div><div class="a" style="left:271px;top:397px;width:17px;height:15px;border-style:solid;border-width:1px;border-color:#505050 #dcdcdc #dcdcdc #505050"></div><div class="a" style="left:289px;top:397px;width:19px;height:15px;border-style:solid;border-width:1px;border-color:#dcdcdc #505050 #505050 #dcdcdc"></div><svg class="a" style="left:262px;top:397px" width="50" height="16" shape-rendering="crispEdges" fill="#000">
<rect x="1" y="1" width="1" height="13" fill="#dcdcdc"/><rect x="2" y="1" width="2" height="13" fill="#8c8c8c"/><rect x="4" y="1" width="1" height="13" fill="#dcdcdc"/><rect x="5" y="1" width="3" height="13" fill="#8c8c8c"/><rect x="8" y="1" width="1" height="13" fill="#505050"/><rect x="1" y="13" width="9" height="1" fill="#505050"/>
<rect x="14" y="3" width="1" height="8"/><rect x="14" y="9" width="9" height="2"/><rect x="13" y="11" width="1" height="1"/><rect x="12" y="12" width="1" height="1"/><rect x="11" y="13" width="1" height="1"/>
<rect x="18" y="1" width="1" height="1"/><rect x="22" y="1" width="1" height="1"/><rect x="18" y="2" width="1" height="1"/><rect x="22" y="2" width="1" height="1"/><rect x="19" y="3" width="1" height="1"/><rect x="21" y="3" width="1" height="1"/><rect x="20" y="4" width="1" height="1"/><rect x="19" y="5" width="1" height="1"/><rect x="21" y="5" width="1" height="1"/><rect x="18" y="6" width="1" height="1"/><rect x="22" y="6" width="1" height="1"/><rect x="18" y="7" width="1" height="1"/><rect x="22" y="7" width="1" height="1"/>
<rect x="28" y="2" width="1" height="1"/><rect x="31" y="2" width="1" height="1"/><rect x="28" y="3" width="1" height="1"/><rect x="31" y="3" width="1" height="1"/><rect x="29" y="4" width="1" height="1"/><rect x="30" y="4" width="1" height="1"/><rect x="29" y="5" width="1" height="1"/><rect x="30" y="5" width="1" height="1"/><rect x="29" y="6" width="1" height="1"/><rect x="30" y="6" width="1" height="1"/><rect x="28" y="7" width="1" height="1"/><rect x="31" y="7" width="1" height="1"/><rect x="28" y="8" width="1" height="1"/><rect x="31" y="8" width="1" height="1"/><rect x="34" y="7" width="1" height="1"/><rect x="36" y="2" width="1" height="1"/><rect x="39" y="2" width="1" height="1"/><rect x="36" y="3" width="1" height="1"/><rect x="39" y="3" width="1" height="1"/><rect x="37" y="4" width="1" height="1"/><rect x="38" y="4" width="1" height="1"/><rect x="37" y="5" width="1" height="1"/><rect x="38" y="5" width="1" height="1"/><rect x="37" y="6" width="1" height="1"/><rect x="38" y="6" width="1" height="1"/><rect x="36" y="7" width="1" height="1"/><rect x="39" y="7" width="1" height="1"/><rect x="36" y="8" width="1" height="1"/><rect x="39" y="8" width="1" height="1"/><rect x="41" y="2" width="1" height="1"/><rect x="44" y="2" width="1" height="1"/><rect x="41" y="3" width="1" height="1"/><rect x="44" y="3" width="1" height="1"/><rect x="42" y="4" width="1" height="1"/><rect x="43" y="4" width="1" height="1"/><rect x="42" y="5" width="1" height="1"/><rect x="43" y="5" width="1" height="1"/><rect x="42" y="6" width="1" height="1"/><rect x="43" y="6" width="1" height="1"/><rect x="41" y="7" width="1" height="1"/><rect x="44" y="7" width="1" height="1"/><rect x="41" y="8" width="1" height="1"/><rect x="44" y="8" width="1" height="1"/>
<rect x="40" y="10" width="6" height="1"/><rect x="41" y="11" width="4" height="1"/><rect x="42" y="12" width="2" height="1"/>
</svg><div class="a" style="left:271px;top:416px;width:17px;height:15px;border-style:solid;border-width:1px;border-color:#505050 #dcdcdc #dcdcdc #505050"></div><div class="a" style="left:289px;top:416px;width:19px;height:15px;border-style:solid;border-width:1px;border-color:#dcdcdc #505050 #505050 #dcdcdc"></div><svg class="a" style="left:262px;top:416px" width="50" height="16" shape-rendering="crispEdges" fill="#000">
<rect x="1" y="1" width="1" height="13" fill="#dcdcdc"/><rect x="2" y="1" width="2" height="13" fill="#8c8c8c"/><rect x="4" y="1" width="1" height="13" fill="#dcdcdc"/><rect x="5" y="1" width="3" height="13" fill="#8c8c8c"/><rect x="8" y="1" width="1" height="13" fill="#505050"/><rect x="1" y="13" width="9" height="1" fill="#505050"/>
<rect x="14" y="3" width="1" height="8"/><rect x="14" y="9" width="9" height="2"/><rect x="13" y="11" width="1" height="1"/><rect x="12" y="12" width="1" height="1"/><rect x="11" y="13" width="1" height="1"/>
<rect x="18" y="1" width="1" height="1"/><rect x="22" y="1" width="1" height="1"/><rect x="18" y="2" width="1" height="1"/><rect x="22" y="2" width="1" height="1"/><rect x="19" y="3" width="1" height="1"/><rect x="21" y="3" width="1" height="1"/><rect x="20" y="4" width="1" height="1"/><rect x="20" y="5" width="1" height="1"/><rect x="20" y="6" width="1" height="1"/><rect x="20" y="7" width="1" height="1"/>
<rect x="28" y="2" width="1" height="1"/><rect x="31" y="2" width="1" height="1"/><rect x="28" y="3" width="1" height="1"/><rect x="31" y="3" width="1" height="1"/><rect x="28" y="4" width="1" height="1"/><rect x="31" y="4" width="1" height="1"/><rect x="29" y="5" width="1" height="1"/><rect x="30" y="5" width="1" height="1"/><rect x="30" y="6" width="1" height="1"/><rect x="30" y="7" width="1" height="1"/><rect x="30" y="8" width="1" height="1"/><rect x="34" y="7" width="1" height="1"/><rect x="36" y="2" width="1" height="1"/><rect x="39" y="2" width="1" height="1"/><rect x="36" y="3" width="1" height="1"/><rect x="39" y="3" width="1" height="1"/><rect x="36" y="4" width="1" height="1"/><rect x="39" y="4" width="1" height="1"/><rect x="37" y="5" width="1" height="1"/><rect x="38" y="5" width="1" height="1"/><rect x="38" y="6" width="1" height="1"/><rect x="38" y="7" width="1" height="1"/><rect x="38" y="8" width="1" height="1"/><rect x="41" y="2" width="1" height="1"/><rect x="44" y="2" width="1" height="1"/><rect x="41" y="3" width="1" height="1"/><rect x="44" y="3" width="1" height="1"/><rect x="41" y="4" width="1" height="1"/><rect x="44" y="4" width="1" height="1"/><rect x="42" y="5" width="1" height="1"/><rect x="43" y="5" width="1" height="1"/><rect x="43" y="6" width="1" height="1"/><rect x="43" y="7" width="1" height="1"/><rect x="43" y="8" width="1" height="1"/>
<rect x="40" y="10" width="6" height="1"/><rect x="41" y="11" width="4" height="1"/><rect x="42" y="12" width="2" height="1"/>
</svg><div class="a" style="left:318px;top:397px;width:16px;height:15px;border-style:solid;border-width:1px;border-color:#dcdcdc #505050 #505050 #dcdcdc"></div><div class="a" style="left:337px;top:397px;width:17px;height:15px;border-style:solid;border-width:1px;border-color:#505050 #dcdcdc #dcdcdc #505050"></div><div class="a" style="left:318px;top:416px;width:16px;height:14px;border-style:solid;border-width:1px;border-color:#dcdcdc #505050 #505050 #dcdcdc"></div><svg class="a" style="left:337px;top:397px" width="17" height="15" shape-rendering="crispEdges" fill="#000"><rect x="8" y="3" width="1" height="9"/><rect x="4" y="7" width="9" height="1"/></svg><svg class="a" style="left:318px;top:397px" width="16" height="15"><circle cx="9.5" cy="5.5" r="3.8" fill="#b3b3b3" stroke="#000" stroke-width="1.3"/><path d="M9.5 3.5v4M7.5 5.5h4" stroke="#000" stroke-width="1.2"/><path d="M2 13 L6.5 8.5" stroke="#000" stroke-width="2.2"/><path d="M2.5 12.5 L6 9" stroke="#dcdcdc" stroke-width="0.8"/><polygon points="11,11 15,11 13,13.5" fill="#000"/></svg><svg class="a" style="left:318px;top:416px" width="16" height="14"><path d="M4.5 12.5 L1.5 8 L2.5 7 L4.5 8.5 L4.5 3.5 Q5.3 2.5 6 3.5 L6 2.5 Q7 1 8 2.5 L8 3 Q9 2 10 3 L10 3.5 Q11 3 12 4 L12 10 L10.5 12.5 Z" fill="#b3b3b3" stroke="#000" stroke-width="1"/><path d="M6 3.5v4M8 2.5v5M10 3.5v4" stroke="#000" stroke-width="0.8"/></svg><div class="a" style="left:427px;top:392px;width:199px;height:49px;border-style:solid;border-width:1px;border-color:#dcdcdc #505050 #505050 #dcdcdc"></div><div class="a" style="left:428px;top:393px;width:197px;height:47px;background:#b3b3b3"></div><div class="a" style="left:436px;top:399px;width:181px;height:36px;background:#fff;border-left:1px solid #404040;border-top:1px solid #404040"></div><div class="a" style="left:530px;top:399px;width:1px;height:36px;background:#000"></div><div class="a" style="left:576px;top:399px;width:1px;height:36px;background:#000"></div><svg class="a" style="left:447px;top:407px" width="8" height="2" shape-rendering="crispEdges" fill="#999"><rect x="0" y="0" width="1" height="1"/><rect x="2" y="0" width="1" height="1"/><rect x="4" y="0" width="1" height="1"/><rect x="6" y="0" width="1" height="1"/></svg><div class="a" style="left:455px;top:401px;width:16px;height:14px;background:#000"></div><svg class="a" style="left:455px;top:401px" width="16" height="14" shape-rendering="crispEdges" fill="#ffff00"><rect x="8" y="0" width="1" height="5"/><rect x="8" y="10" width="1" height="4"/><rect x="0" y="7" width="6" height="1"/><rect x="11" y="7" width="5" height="1"/><rect x="6" y="5" width="1" height="1"/><rect x="7" y="6" width="1" height="1"/><rect x="8" y="7" width="1" height="1"/><rect x="9" y="8" width="1" height="1"/><rect x="10" y="9" width="1" height="1"/><rect x="10" y="5" width="1" height="1"/><rect x="9" y="6" width="1" height="1"/><rect x="7" y="8" width="1" height="1"/><rect x="6" y="9" width="1" height="1"/></svg><div class="a" style="left:471px;top:400px;width:46px;height:15px;background:#0000ff"></div><div class="t r11" style="left:474px;top:401px;color:#fff;letter-spacing:0.08px">Cursor 0</div><div class="t r11" style="left:535px;top:401px;letter-spacing:0.3px">0.1</div><div class="t r11" style="left:581px;top:401px;letter-spacing:0.3px">0.8</div>
  <!-- buttons -->
  <div class="a" style="left:23px;top:462px;width:84px;height:35px;border:1px solid #000;background:#b3b3b3;box-shadow:inset 1px 1px 0 #e8e8e8,inset -2px -2px 0 #505050"></div>
  <div class="t r11" style="left:38px;top:474px;letter-spacing:-0.08px">Calculation</div>
  <div class="a" style="left:160px;top:462px;width:80px;height:35px;border:1px solid #000;background:#b3b3b3;box-shadow:inset 1px 1px 0 #e8e8e8,inset -2px -2px 0 #505050"></div>
  <div class="t r11" style="left:182px;top:474px;letter-spacing:0.3px">Theory</div>
  <div class="a" style="left:547px;top:462px;width:80px;height:35px;border:1px solid #000;background:#b3b3b3;box-shadow:inset 1px 1px 0 #e8e8e8,inset -2px -2px 0 #505050"></div>
  <div class="t r11" style="left:573px;top:474px;letter-spacing:-0.6px;color:#f00">STOP</div>
  <!-- diamond -->
  <div class="a" style="left:633px;top:298px;width:34px;height:35px;border-top:1px solid #d8d8d8;border-left:1px solid #d8d8d8;border-right:1px solid #505050;border-bottom:1px solid #505050;background:#b3b3b3"></div>
  <svg class="a" style="left:633px;top:298px" width="34" height="35">
    <path d="M16.6 2 L32 17.1 L16.6 32.4 L1.1 17.1 Z" fill="none" stroke="#000" stroke-width="1.1"/>
    <path d="M9.5 8.8 L25 24 M8.1 10.2 L23.6 25.4 M25 10.2 L9.5 25.4 M23.6 8.8 L8.1 24" fill="none" stroke="#000" stroke-width="1"/>
  </svg>
</div>
</body></html>
